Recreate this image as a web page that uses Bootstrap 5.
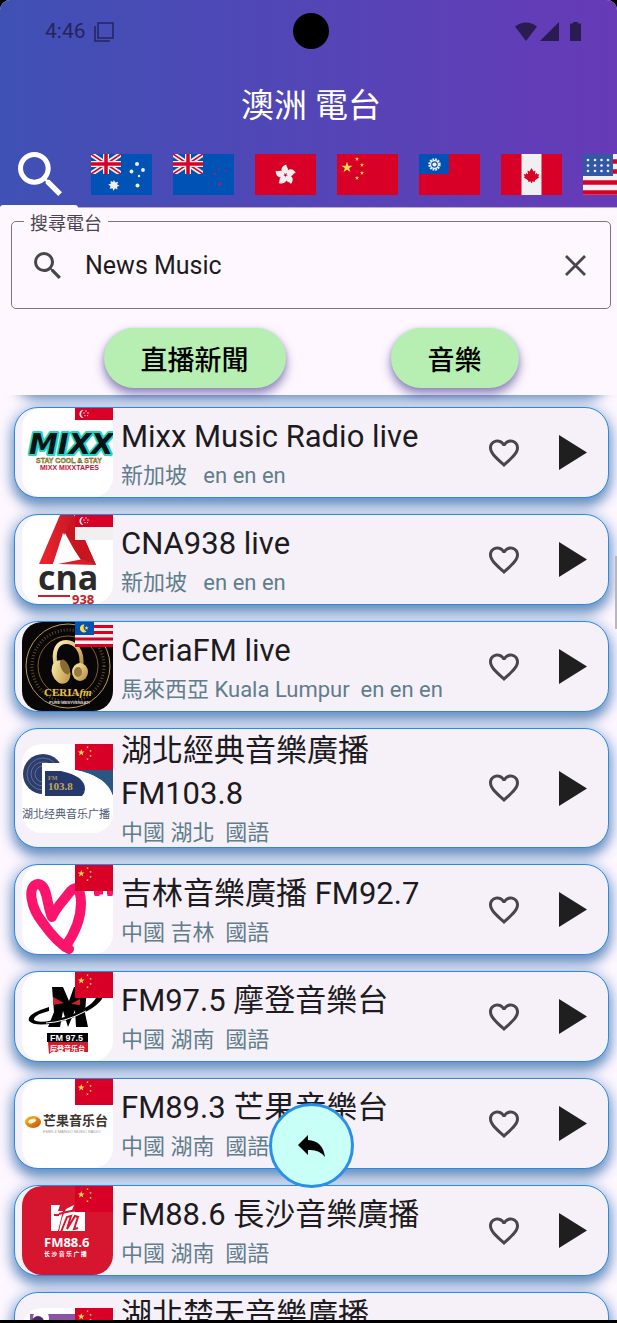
<!DOCTYPE html>
<html lang="zh-Hant">
<head>
<meta charset="utf-8">
<meta name="viewport" content="width=device-width, initial-scale=1">
<title>澳洲 電台</title>
<link href="https://cdn.jsdelivr.net/npm/bootstrap@5.3.0/dist/css/bootstrap.min.css" rel="stylesheet">
<style>
  body { background: #000; font-family: Roboto, "Noto Sans CJK TC", sans-serif; color: #1d1b20; }
  svg { display: block; flex: none; }
  .app-shell { background: #fef7ff; border-radius: 10px 10px 0 0; border-bottom: 3px solid #000; }
  .app-head { background: linear-gradient(90deg, #3f51b5, #673ab7); border-bottom: 1px solid #b9a6dd; }
  .status-row { height: 62px; padding: 2px 35px 0 45px; font-size: 21px; color: #26235f; }
  .camera { width: 36px; height: 36px; top: 13px; }
  .nudge { padding-left: 5px; }
  .app-title { height: 84px; padding-top: 4px; font-size: 33px; font-weight: 400; color: #fff; }
  .tab-strip { height: 61px; gap: 21px; padding-bottom: 5px; }
  .tab-btn { width: 61px; height: 41px; }
  .tab-search { width: 70px; height: 44px; padding: 0 0 0 18px; }
  .tab-mark { width: 78px; height: 3px; left: 0; bottom: -1px; background: #fef7ff; border-radius: 3px 3px 0 0; }
  .search-panel { padding: 13px 6px 7px 11px; background: #fef7ff; z-index: 1; }
  .search-box { height: 88px; border: 1px solid #7b7580; border-radius: 5px; padding: 0 24px 0 22px; gap: 24px; color: #49454f; }
  .search-label { left: 12px; top: -12px; padding: 0 6px; background: #fef7ff; font-size: 18px; line-height: 27px; }
  .search-input { border: 0; outline: 0; background: none; font-size: 25px; color: #1d1b20; min-width: 0; padding: 2px 0 0; }
  .quick-row { gap: 105px; margin-top: 19px; }
  .quick-btn, .quick-btn:hover { background: #b7efb2; color: #000; height: 60px; padding: 6px 37px 0; font-size: 27px; line-height: 54px; font-weight: 500; border: 0;
    box-shadow: 0 6px 10px 1px rgba(66, 56, 140, .5), 0 1px 4px rgba(66, 56, 140, .2); }
  .station-list { gap: 16px; padding: 0 8px 0 14px; }
  .station-list::before { content: ""; flex: none; height: 60px; margin-top: -64px; }
  .station-list::before, .station { border: 1px solid #2b8ae0; border-radius: 24px;
    box-shadow: 0 8px 12px rgba(30, 90, 155, .5), 0 3px 14px 3px rgba(50, 120, 190, .4); }
  .station { flex: none; min-height: 91px; background: #f6f1f9; padding-left: 7px; overflow: hidden; }
  .station-tall { min-height: 120px; }
  .station-text { margin-left: 8px; min-width: 0; }
  .station-name { font-size: 31px; line-height: 43px; font-weight: 400; margin: 0; }
  .station-sub { font-size: 22px; line-height: 28px; padding-top: 4px; color: #607d8b; margin: 0; white-space: pre; }
  .act { flex: none; width: 68px; height: 68px; color: #49454f; }
  .act + .act { width: 70px; }
  .bar-thumb { width: 2px; height: 73px; right: 0; top: 556px; background: #b9b7bb; }
  .fab-row { bottom: 132px; pointer-events: none; }
  .fab { width: 85px; height: 85px; border: 3px solid #2b8fe8; background: #c8fff6; color: #000; pointer-events: auto; }
</style>
</head>
<body>
<svg width="0" height="0" class="position-absolute" aria-hidden="true">
  <defs>
    <path id="star" d="M0-5 1.2-1.6 4.8-1.5 1.9.6 3 4 0 2-3 4-1.9.6-4.8-1.5-1.2-1.6z"/>
    <symbol id="i-search" viewBox="3 3 17.5 17.5"><path fill="currentColor" d="M15.5 14h-.79l-.28-.27A6.47 6.47 0 0 0 16 9.5 6.5 6.5 0 1 0 9.5 16c1.61 0 3.09-.59 4.23-1.57l.27.28v.79l5 4.99L20.49 19zm-6 0C7.01 14 5 11.99 5 9.5S7.01 5 9.5 5 14 7.01 14 9.5 11.99 14 9.5 14z"/></symbol>
    <symbol id="i-heart" viewBox="0 0 24 24"><path fill="currentColor" d="M16.5 3c-1.74 0-3.41.81-4.5 2.09C10.91 3.81 9.24 3 7.5 3 4.42 3 2 5.42 2 8.5c0 3.78 3.4 6.86 8.55 11.54L12 21.35l1.45-1.32C18.6 15.36 22 12.28 22 8.5 22 5.42 19.58 3 16.5 3zm-4.4 15.55-.1.1-.1-.1C7.14 14.24 4 11.39 4 8.5 4 6.5 5.5 5 7.5 5c1.54 0 3.04.99 3.57 2.36h1.87C13.46 5.99 14.96 5 16.5 5c2 0 3.5 1.5 3.5 3.5 0 2.89-3.14 5.74-7.9 10.05z"/></symbol>
    <symbol id="i-play" viewBox="0 0 28 35"><path fill="#1f1f20" d="M0 0 28 17.500 0 35z"/></symbol>
    <symbol id="jack" viewBox="0 0 30 20"><path fill="#0052b4" d="M0 0h30v20H0z"/><path stroke="#f0f0f0" stroke-width="5" d="m0 0 30 20M30 0 0 20"/><path stroke="#d80027" stroke-width="1.600" d="m0 0 30 20M30 0 0 20"/><path stroke="#f0f0f0" stroke-width="6" d="M15 0v20M0 10h30"/><path stroke="#d80027" stroke-width="3.500" d="M15 0v20M0 10h30"/></symbol>
    <symbol id="f-au" viewBox="0 0 61 41"><path fill="#0052b4" d="M0 0h61v41H0z"/><use href="#jack" width="30" height="20"/><g fill="#f0f0f0"><path d="m23 26 1.300 2.500 2.800-.8-.9 2.700 2.400 1.400-2.600 1 .5 2.800-2.500-1.300L22.500 37l-1-2.700-2.800.5.800-2.600-2.300-1.600 2.700-.8-.4-2.800 2.500 1z"/><circle cx="46" cy="10" r="2"/><circle cx="40.500" cy="17.500" r="1.900"/><circle cx="52" cy="16" r="1.900"/><circle cx="48" cy="22" r="1.200"/><circle cx="46.500" cy="31.500" r="2"/></g></symbol>
    <symbol id="f-nz" viewBox="0 0 61 41"><path fill="#0052b4" d="M0 0h61v41H0z"/><use href="#jack" width="30" height="20"/><g fill="#8e2a6e"><use href="#star" transform="translate(46 15) scale(.3)"/><use href="#star" transform="translate(41.500 20) scale(.4)"/><use href="#star" transform="translate(52 17) scale(.3)"/><use href="#star" transform="translate(46.500 30.500) scale(.55)"/></g></symbol>
    <symbol id="f-hk" viewBox="0 0 61 41"><path fill="#d80027" d="M0 0h61v41H0z"/><g fill="#f0f0f0" transform="translate(30.500 21)"><path id="petal" d="M0-1C-6-3-5-9 1-10.500 0-8 6-5 0-1z"/><use href="#petal" transform="rotate(72)"/><use href="#petal" transform="rotate(144)"/><use href="#petal" transform="rotate(216)"/><use href="#petal" transform="rotate(288)"/></g></symbol>
    <symbol id="f-cn" viewBox="0 0 61 41" preserveAspectRatio="none"><path fill="#d80027" d="M0 0h61v41H0z"/><g fill="#ffda44"><use href="#star" transform="translate(10 13.500) scale(1.150)"/><use href="#star" transform="translate(20 5) scale(.45)"/><use href="#star" transform="translate(25 11) scale(.45)"/><use href="#star" transform="translate(25 19) scale(.45)"/><use href="#star" transform="translate(20 24) scale(.45)"/></g></symbol>
    <symbol id="f-tw" viewBox="0 0 61 41"><path fill="#d80027" d="M0 0h61v41H0z"/><path fill="#0052b4" d="M0 0h30v20H0z"/><g transform="translate(15.500 10.500)"><circle r="5" fill="none" stroke="#f0f0f0" stroke-width="2.400" stroke-dasharray="1.700 .917"/><circle r="3.900" fill="none" stroke="#f0f0f0" stroke-width="1.200"/><circle r="2.100" fill="#f0f0f0"/></g></symbol>
    <symbol id="f-ca" viewBox="0 0 61 41"><path fill="#d80027" d="M0 0h61v41H0z"/><path fill="#f0f0f0" d="M20.500 0h20v41h-20z"/><path fill="#d80027" d="m30.500 14 2 3.500 2-1-.6 4 2-1.500.4 1.400 2-.3-1 2.300 1 .8-4.500 3.200.3 1.300-3-.2V29h-1.200v-1.500l-3 .2.300-1.300-4.500-3.200 1-.8-1-2.300 2 .3.400-1.400 2 1.500-.6-4 2 1z"/></symbol>
    <symbol id="f-us" viewBox="0 0 61 41"><path fill="#f0f0f0" d="M0 0h61v41H0z"/><path stroke="#d80027" stroke-width="4.500" d="M30 7.500h31M30 17.500h31M0 28.500h61M0 38.500h61"/><path fill="#3457a6" d="M0 0h30v22H0z"/><g fill="#f0f0f0"><g id="us-row"><circle cx="5" cy="6" r="1.300"/><circle cx="12" cy="6" r="1.300"/><circle cx="18.500" cy="6" r="1.300"/><circle cx="25" cy="6" r="1.300"/></g><use href="#us-row" y="5.500"/><use href="#us-row" y="11"/></g></symbol>
    <symbol id="f-sg" viewBox="0 0 38 25"><path fill="#f0f0f0" d="M0 0h38v25H0z"/><path fill="#d80027" d="M0 0h38v12H0z"/><path fill="#f0f0f0" d="M8.500 2a4 4 0 1 0 0 8 4.500 4.500 0 0 1 0-8z"/><g fill="#f0f0f0"><circle cx="11" cy="3" r=".7"/><circle cx="9" cy="5" r=".7"/><circle cx="13" cy="5" r=".7"/><circle cx="10" cy="7.600" r=".7"/><circle cx="12.500" cy="7.600" r=".7"/></g></symbol>
    <symbol id="f-my" viewBox="0 0 38 25"><path fill="#f0f0f0" d="M0 0h38v25H0z"/><path stroke="#d80027" stroke-width="3" d="M19 4.500h19M19 10.500h19M0 17h38M0 23.500h38"/><path fill="#0052b4" d="M0 0h19v13H0z"/><path fill="#ffda44" d="M9.500 2.500a4 4 0 1 0 2 7 4.500 4.500 0 0 1-2-7z"/><use href="#star" fill="#ffda44" transform="translate(11.500 6) scale(.45)"/></symbol>
    <clipPath id="tile"><rect width="91" height="89" rx="20"/></clipPath>
    <linearGradient id="cna-red" x2="1"><stop stop-color="#ed2530"/><stop offset="1" stop-color="#b0101c"/></linearGradient>
    <linearGradient id="gold" x2="1" y2="1"><stop stop-color="#fff2b4"/><stop offset="1" stop-color="#b58a36"/></linearGradient>
    <linearGradient id="mango" x2="1" y2="1"><stop stop-color="#f6c51c"/><stop offset="1" stop-color="#c9480c"/></linearGradient>
  </defs>
</svg>

<div class="app-shell vh-100 d-flex flex-column position-relative overflow-hidden">
  <header class="app-head">
    <div class="status-row d-flex align-items-center">
      <span>4:46</span>
      <svg class="ms-2" width="20" height="20" viewBox="0 0 20 20" fill="none" stroke="currentColor" stroke-width="1.500"><path d="M4 1h15v15H4z"/><path d="M1 4v15h15"/></svg>
      <svg class="ms-auto" width="67" height="20" viewBox="0 0 67 20" fill="#2a1c50"><path d="M0 4.500Q11-3.500 22 4.500L11 19zM44 0v19H25zM58 1.500V0h5v1.500h3V19H55V1.500z"/></svg>
    </div>
    <div class="nudge position-absolute top-0 start-0 w-100 d-flex justify-content-center"><div class="camera position-relative rounded-circle bg-black"></div></div>
    <h1 class="app-title nudge d-flex align-items-center justify-content-center m-0">澳洲 電台</h1>
    <nav class="tab-strip d-flex align-items-center position-relative" aria-label="地區">
      <button class="tab-search btn border-0 rounded-0 text-white flex-shrink-0" aria-label="搜尋"><svg width="44" height="44"><use href="#i-search"/></svg></button>
      <button class="tab-btn btn p-0 border-0 rounded-0 flex-shrink-0" aria-label="澳洲"><svg width="61" height="41"><use href="#f-au"/></svg></button>
      <button class="tab-btn btn p-0 border-0 rounded-0 flex-shrink-0" aria-label="紐西蘭"><svg width="61" height="41"><use href="#f-nz"/></svg></button>
      <button class="tab-btn btn p-0 border-0 rounded-0 flex-shrink-0" aria-label="香港"><svg width="61" height="41"><use href="#f-hk"/></svg></button>
      <button class="tab-btn btn p-0 border-0 rounded-0 flex-shrink-0" aria-label="中國"><svg width="61" height="41"><use href="#f-cn"/></svg></button>
      <button class="tab-btn btn p-0 border-0 rounded-0 flex-shrink-0" aria-label="台灣"><svg width="61" height="41"><use href="#f-tw"/></svg></button>
      <button class="tab-btn btn p-0 border-0 rounded-0 flex-shrink-0" aria-label="加拿大"><svg width="61" height="41"><use href="#f-ca"/></svg></button>
      <button class="tab-btn btn p-0 border-0 rounded-0 flex-shrink-0" aria-label="美國"><svg width="61" height="41"><use href="#f-us"/></svg></button>
      <div class="tab-mark position-absolute"></div>
    </nav>
  </header>

  <section class="search-panel position-relative">
    <div class="search-box d-flex align-items-center position-relative">
      <label class="search-label position-absolute" for="q">搜尋電台</label>
      <svg width="27" height="27"><use href="#i-search"/></svg>
      <input class="search-input flex-grow-1" id="q" type="text" value="News Music">
      <button class="btn p-0 border-0" aria-label="清除"><svg width="21" height="21" viewBox="0 0 21 21" stroke="#49454f" stroke-width="2.800"><path d="m1 1 19 19M20 1 1 20"/></svg></button>
    </div>
    <div class="quick-row d-flex justify-content-center">
      <button class="quick-btn btn rounded-pill">直播新聞</button>
      <button class="quick-btn btn rounded-pill">音樂</button>
    </div>
  </section>

  <main class="station-list d-flex flex-column flex-grow-1 overflow-hidden">
    <article class="station d-flex align-items-center">
      <svg width="91" height="89" viewBox="0 0 91 89" role="img" aria-label="MIXX"><g clip-path="url(#tile)"><path fill="#fff" d="M0 0h91v89H0z"/>
        <text x="7" y="46" font-size="29" font-weight="700" font-style="italic" font-family="DejaVu Sans" fill="#0b1114" stroke="#1fd6c4" stroke-width="4" stroke-linejoin="round" paint-order="stroke">MIXX</text>
        <text x="14" y="55" font-size="7" font-weight="700" fill="#d8c72e" stroke="#222" stroke-width=".3" font-family="Liberation Sans">STAY COOL &amp; STAY</text>
        <text x="18" y="62" font-size="7" font-weight="700" fill="#c41237" font-family="Liberation Sans">MIXX MIXXTAPES</text></g>
        <use href="#f-sg" x="53" width="38" height="25" clip-path="inset(0 0 12px 0)"/></svg>
      <div class="station-text flex-grow-1"><h2 class="station-name">Mixx Music Radio live</h2><p class="station-sub">新加坡   en en en</p></div>
      <button class="act btn border-0 p-0 d-flex align-items-center justify-content-center" aria-label="收藏"><svg width="36" height="36"><use href="#i-heart"/></svg></button>
      <button class="act btn border-0 p-0 d-flex align-items-center justify-content-center" aria-label="播放"><svg width="28" height="35"><use href="#i-play"/></svg></button>
    </article>

    <article class="station d-flex align-items-center">
      <svg width="91" height="89" viewBox="0 0 91 89" role="img" aria-label="CNA 938"><g clip-path="url(#tile)"><path fill="#fff" d="M0 0h91v89H0z"/>
        <path fill="url(#cna-red)" d="M38 0h14l22 50-15-5-18-27-10 31H17z"/><path fill="#c9151f" d="m43 18 20 27 11 5L52 0z"/><path fill="#d81e29" d="m36 49 25-5 13 6z"/><path fill="#fff" d="M43 18 31 49l26-5z"/>
        <text x="16" y="75" font-size="34" font-weight="700" fill="#2b2a2c" font-family="Open Sans">cna</text>
        <path fill="#c9202a" d="M16 80h32v2H16z"/><text x="50" y="89" font-size="13" font-weight="700" fill="#c9202a" font-family="Open Sans">938</text></g>
        <use href="#f-sg" x="53" width="38" height="25"/></svg>
      <div class="station-text flex-grow-1"><h2 class="station-name">CNA938 live</h2><p class="station-sub">新加坡   en en en</p></div>
      <button class="act btn border-0 p-0 d-flex align-items-center justify-content-center" aria-label="收藏"><svg width="36" height="36"><use href="#i-heart"/></svg></button>
      <button class="act btn border-0 p-0 d-flex align-items-center justify-content-center" aria-label="播放"><svg width="28" height="35"><use href="#i-play"/></svg></button>
    </article>

    <article class="station d-flex align-items-center">
      <svg width="91" height="89" viewBox="0 0 91 89" role="img" aria-label="CeriaFM"><g clip-path="url(#tile)"><path fill="#080606" d="M0 0h91v89H0z"/>
        <g fill="none"><circle cx="46" cy="44" r="42" stroke="#b99b55"/><circle cx="46" cy="44" r="36" stroke="#5c4724" stroke-width="3" stroke-dasharray="1 2"/><circle cx="46" cy="44" r="30" stroke="#80612f"/><path stroke="url(#gold)" stroke-width="4" d="M34 44C30 28 36 20 44 20s18 7 15 26"/></g>
        <ellipse cx="39" cy="50" rx="9" ry="12" fill="url(#gold)" transform="rotate(-20 39 50)"/><ellipse cx="43" cy="45" rx="4" ry="8" fill="#8b6a30" transform="rotate(-25 43 45)"/><ellipse cx="58" cy="50" rx="8" ry="9" fill="url(#gold)"/><ellipse cx="56" cy="50" rx="4" ry="5" fill="#9b7940"/>
        <text x="22" y="74" font-size="11" font-weight="700" fill="#e8c54a" font-family="Liberation Serif">CERIA<tspan font-style="italic">fm</tspan></text>
        <text x="27" y="82" font-size="4" font-weight="700" fill="#ddd" font-family="Liberation Sans">PURE MESYVENSATI</text></g>
        <use href="#f-my" x="53" width="38" height="25"/></svg>
      <div class="station-text flex-grow-1"><h2 class="station-name">CeriaFM live</h2><p class="station-sub">馬來西亞 Kuala Lumpur  en en en</p></div>
      <button class="act btn border-0 p-0 d-flex align-items-center justify-content-center" aria-label="收藏"><svg width="36" height="36"><use href="#i-heart"/></svg></button>
      <button class="act btn border-0 p-0 d-flex align-items-center justify-content-center" aria-label="播放"><svg width="28" height="35"><use href="#i-play"/></svg></button>
    </article>

    <article class="station d-flex align-items-center">
      <svg width="91" height="89" viewBox="0 0 91 89" role="img" aria-label="湖北经典音乐广播"><g clip-path="url(#tile)"><path fill="#fff" d="M0 0h91v89H0z"/>
        <circle cx="21" cy="30" r="20" fill="#2d3d6b"/><g fill="none" stroke="#7583a8" stroke-width=".7"><circle cx="21" cy="30" r="16"/><circle cx="21" cy="30" r="12"/><circle cx="21" cy="30" r="8"/></g>
        <path fill="#2c5584" d="M53 22h38v30q-6-20-38-26z"/><path fill="#fff" d="M20 19h22l2 5 9 2q27 4 38 26H20z"/><path fill="#24386c" d="M23 27h16q24 5 24 18 0 4-3 7H23z"/>
        <text x="26" y="36" font-size="6" font-weight="700" fill="#ad955d" font-family="Liberation Serif">FM</text><text x="26" y="46" font-size="11" font-weight="700" fill="#c6a75f" font-family="Liberation Serif">103.8</text>
        <text x="0" y="74" font-size="11" fill="#4a5676" font-family="Noto Sans CJK SC">湖北经典音乐广播</text></g>
        <use href="#f-cn" x="53" width="38" height="26"/></svg>
      <div class="station-text flex-grow-1"><h2 class="station-name">湖北經典音樂廣播 FM103.8</h2><p class="station-sub">中國 湖北  國語</p></div>
      <button class="act btn border-0 p-0 d-flex align-items-center justify-content-center" aria-label="收藏"><svg width="36" height="36"><use href="#i-heart"/></svg></button>
      <button class="act btn border-0 p-0 d-flex align-items-center justify-content-center" aria-label="播放"><svg width="28" height="35"><use href="#i-play"/></svg></button>
    </article>

    <article class="station d-flex align-items-center">
      <svg width="91" height="89" viewBox="0 0 91 89" role="img" aria-label="吉林音樂廣播"><g clip-path="url(#tile)"><path fill="#fff" d="M0 0h91v89H0z"/>
        <path fill="none" stroke="#fa146c" stroke-width="10" stroke-linecap="round" stroke-linejoin="round" d="M30 52C24 38 26 20 16 19 5 20 8 42 21 58q14 20 26 26M43 82q16-22 16-44c0-16-6-18-12-10S33 44 30 52"/><path stroke="#fa146c" stroke-width="5" d="M72 27h9M75 25v6M85 27h6M88 25v6"/></g>
        <use href="#f-cn" x="53" width="38" height="26"/></svg>
      <div class="station-text flex-grow-1"><h2 class="station-name">吉林音樂廣播 FM92.7</h2><p class="station-sub">中國 吉林  國語</p></div>
      <button class="act btn border-0 p-0 d-flex align-items-center justify-content-center" aria-label="收藏"><svg width="36" height="36"><use href="#i-heart"/></svg></button>
      <button class="act btn border-0 p-0 d-flex align-items-center justify-content-center" aria-label="播放"><svg width="28" height="35"><use href="#i-play"/></svg></button>
    </article>

    <article class="station d-flex align-items-center">
      <svg width="91" height="89" viewBox="0 0 91 89" role="img" aria-label="FM97.5"><g clip-path="url(#tile)"><path fill="#fff" d="M0 0h91v89H0z"/>
        <path d="M30 15h11l6 14 5-14h13l-2 26 3 14H54l-1-17-7 17-5-16-3 16H26l6-15z"/><path fill="#d3202f" d="m31 25 11 6-11 2zM58 27l-9 5 9 1z"/>
        <path d="M27 35Q4 42 7 49q8 8 41-2Q76 36 81 25l-7 1q-5 9-28 18-28 9-34 4-1-5 15-9z"/><path stroke="#fff" d="M24 51q20-1 40-12" fill="none"/>
        <path d="M25 61h41v9H25z"/><path fill="#cf1c2b" d="M26 70h40v10H30l-3 2z"/>
        <text x="28" y="69" font-size="9" font-weight="700" fill="#fff" font-family="Liberation Sans">FM 97.5</text><text x="28" y="79" font-size="7" font-weight="700" fill="#fff" font-family="Noto Sans CJK SC">摩登音乐台</text></g>
        <use href="#f-cn" x="53" width="38" height="26"/></svg>
      <div class="station-text flex-grow-1"><h2 class="station-name">FM97.5 摩登音樂台</h2><p class="station-sub">中國 湖南  國語</p></div>
      <button class="act btn border-0 p-0 d-flex align-items-center justify-content-center" aria-label="收藏"><svg width="36" height="36"><use href="#i-heart"/></svg></button>
      <button class="act btn border-0 p-0 d-flex align-items-center justify-content-center" aria-label="播放"><svg width="28" height="35"><use href="#i-play"/></svg></button>
    </article>

    <article class="station d-flex align-items-center">
      <svg width="91" height="89" viewBox="0 0 91 89" role="img" aria-label="芒果音乐台"><g clip-path="url(#tile)"><path fill="#fff" d="M0 0h91v89H0z"/>
        <ellipse cx="11" cy="43" rx="8" ry="6" fill="url(#mango)"/><ellipse cx="10" cy="42" rx="4" ry="2" fill="#fff6d8" transform="rotate(-20 10 42)"/>
        <text x="21" y="46" font-size="13" font-weight="700" fill="#3d3430" font-family="Noto Sans CJK SC">芒果音乐台</text><text x="21" y="54" font-size="4" fill="#999" font-family="Liberation Sans">FM89.3 MANGO MUSIC RADIO</text></g>
        <use href="#f-cn" x="53" width="38" height="26"/></svg>
      <div class="station-text flex-grow-1"><h2 class="station-name">FM89.3 芒果音樂台</h2><p class="station-sub">中國 湖南  國語</p></div>
      <button class="act btn border-0 p-0 d-flex align-items-center justify-content-center" aria-label="收藏"><svg width="36" height="36"><use href="#i-heart"/></svg></button>
      <button class="act btn border-0 p-0 d-flex align-items-center justify-content-center" aria-label="播放"><svg width="28" height="35"><use href="#i-play"/></svg></button>
    </article>

    <article class="station d-flex align-items-center">
      <svg width="91" height="89" viewBox="0 0 91 89" role="img" aria-label="FM88.6"><g clip-path="url(#tile)"><path fill="#d6152e" d="M0 0h91v89H0z"/>
        <path fill="#fff" d="M29 19h9l-2 6h5l-5 20h-7zM44 23l8-4-2 5h13v21H37l3-13z"/><path fill="none" stroke="#d6152e" stroke-width="2" d="M32 29h5M39 46l6-15 4-1-4 13 8-13 3 1-4 12 4-1M37 28q12-4 26-4"/>
        <text x="22" y="61" font-size="13" font-weight="700" fill="#fff" font-family="Open Sans">FM88.6</text><text x="22" y="70" font-size="6" font-weight="700" fill="#fff" font-family="Noto Sans CJK SC">长 沙 音 乐 广 播</text></g>
        <use href="#f-cn" x="53" width="38" height="26"/></svg>
      <div class="station-text flex-grow-1"><h2 class="station-name">FM88.6 長沙音樂廣播</h2><p class="station-sub">中國 湖南  國語</p></div>
      <button class="act btn border-0 p-0 d-flex align-items-center justify-content-center" aria-label="收藏"><svg width="36" height="36"><use href="#i-heart"/></svg></button>
      <button class="act btn border-0 p-0 d-flex align-items-center justify-content-center" aria-label="播放"><svg width="28" height="35"><use href="#i-play"/></svg></button>
    </article>

    <article class="station station-tall d-flex align-items-center">
      <svg width="91" height="89" viewBox="0 0 91 89" role="img" aria-label="湖北楚天音樂廣播"><g clip-path="url(#tile)"><path fill="#fff" d="M0 0h91v89H0z"/><path fill="#8a55a6" d="M8 6h83v83H8z"/><circle cx="19" cy="10" r="8" fill="#fff"/><circle cx="16" cy="14" r="6" fill="#55256b"/></g>
        <use href="#f-cn" x="53" width="38" height="26"/></svg>
      <div class="station-text flex-grow-1 align-self-start"><h2 class="station-name">湖北楚天音樂廣播</h2></div>
    </article>
  </main>

  <div class="bar-thumb position-absolute"></div>
  <div class="fab-row nudge position-absolute start-0 w-100 d-flex justify-content-center">
    <button class="fab btn rounded-circle p-0 d-flex align-items-center justify-content-center" aria-label="返回"><svg width="27" height="22" viewBox="0 0 27 22"><path fill="currentColor" d="M0 10 10 0v5q15 1 17 17-6-8-17-7v5z"/></svg></button>
  </div>
</div>
<script src="https://cdn.jsdelivr.net/npm/bootstrap@5.3.0/dist/js/bootstrap.bundle.min.js"></script>
</body>
</html>
